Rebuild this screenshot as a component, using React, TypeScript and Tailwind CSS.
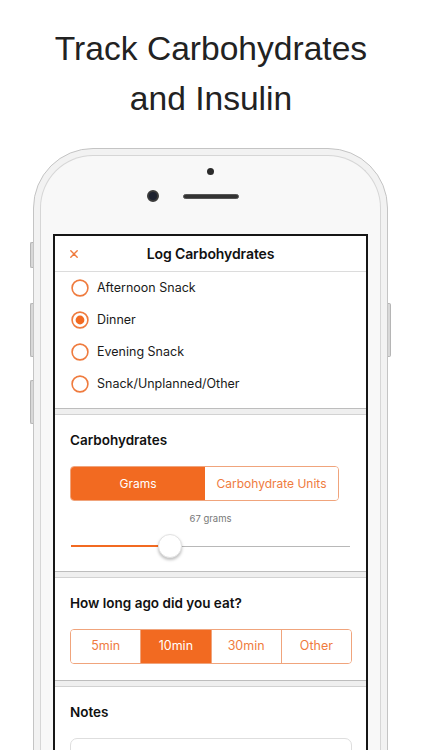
import React from "react";

const ORANGE = "#f26a21";

function Radio({ checked }: { checked?: boolean }) {
  return (
    <svg width="18" height="18" viewBox="0 0 18 18" className="shrink-0">
      <circle cx="9" cy="9" r="7.9" fill="none" stroke="#ef7b3e" strokeWidth="1.6" />
      {checked && <circle cx="9" cy="9" r="4.4" fill={ORANGE} />}
    </svg>
  );
}

function Separator() {
  return <div className="h-[7px] bg-[#efefef] border-t border-t-[#bdbdbd] border-b border-b-[#d2d2d2]" />;
}

export default function App() {
  const meals = [
    { label: "Afternoon Snack" },
    { label: "Dinner", checked: true },
    { label: "Evening Snack" },
    { label: "Snack/Unplanned/Other" },
  ];
  const times = ["5min", "10min", "30min", "Other"];
  const screenFont = { fontFamily: "Inter, 'Noto Sans', sans-serif" };

  return (
    <div className="w-[422px] h-[750px] overflow-hidden bg-white">
      <div
        className="pt-[24px] text-center text-[33.6px] leading-[50px] text-[#222]"
        style={{ fontFamily: "'Liberation Sans', Arial, sans-serif" }}
      >
        <div>Track Carbohydrates</div>
        <div>and Insulin</div>
      </div>

      {/* Phone */}
      <div className="relative mt-[24px] ml-[33px] w-[355px]">
        {/* side buttons */}
        <div className="absolute left-[-3px] top-[94px] w-[3px] h-[26px] rounded-l-[2px] bg-[#d8d8d8] border border-[#b5b5b5] border-r-0" />
        <div className="absolute left-[-3px] top-[155px] w-[3px] h-[54px] rounded-l-[2px] bg-[#d8d8d8] border border-[#b5b5b5] border-r-0" />
        <div className="absolute left-[-3px] top-[232px] w-[3px] h-[44px] rounded-l-[2px] bg-[#d8d8d8] border border-[#b5b5b5] border-r-0" />
        <div className="absolute right-[-3px] top-[155px] w-[3px] h-[54px] rounded-r-[2px] bg-[#d8d8d8] border border-[#b5b5b5] border-l-0" />

        <div className="h-[640px] rounded-t-[60px] border border-[#c4c4c4] bg-[#f2f2f2] p-[6px] pb-0">
          <div className="h-full rounded-t-[53px] border border-[#d6d6d6] border-b-0 bg-[#f8f8f8] px-[12px]">
            {/* top: dot, camera, speaker */}
            <div className="flex flex-col items-center pt-[12px]">
              <div className="w-[7px] h-[7px] rounded-full bg-[#2b2b2b]" />
              <div className="mt-[15px] flex items-center">
                <div className="w-[12px] h-[12px] rounded-full bg-[#1d2230] border-[2px] border-[#3a3a3a] mr-[24px]" />
                <div className="w-[56px] h-[5px] rounded-full bg-[#333] border border-[#555]" />
                <div className="w-[36px]" />
              </div>
            </div>

            {/* Screen */}
            <div
              className="mt-[32px] h-[530px] border-2 border-b-0 border-[#161616] bg-white text-[#111]"
              style={screenFont}
            >
              {/* header */}
              <div className="relative h-[36px] flex items-center justify-center border-b border-[#dcdcdc]">
                <svg className="absolute left-[15px] top-[14px]" width="8" height="8" viewBox="0 0 8 8">
                  <path d="M0.8 0.8 L7.2 7.2 M7.2 0.8 L0.8 7.2" stroke="#ef7b3e" strokeWidth="1.4" strokeLinecap="round" />
                </svg>
                <span className="text-[14px] font-semibold tracking-[-0.1px] text-[#111]">Log Carbohydrates</span>
              </div>

              {/* radio list */}
              <div className="pb-[8px]">
                {meals.map((m) => (
                  <div key={m.label} className="h-[32px] flex items-center pl-[16px] gap-[8px]">
                    <Radio checked={m.checked} />
                    <span className="text-[12.5px] text-[#1a1a1a]">{m.label}</span>
                  </div>
                ))}
              </div>

              <Separator />

              {/* carbs section */}
              <div className="px-[15px] pt-[15px] pb-[13px]">
                <div className="h-[20px] leading-[20px] text-[13.5px] font-semibold text-[#111]">Carbohydrates</div>
                <div className="mt-[16px] w-[269px] h-[35px] flex rounded-[4px] border border-[#f0a47c] overflow-hidden text-[12px]">
                  <div className="w-[134px] flex items-center justify-center bg-[#f26a21] text-white">Grams</div>
                  <div className="flex-1 flex items-center justify-center text-[#ef7b3e] bg-white">Carbohydrate Units</div>
                </div>
                <div className="mt-[12px] h-[12px] leading-[12px] text-center text-[9.5px] text-[#777]">67 grams</div>
                <div className="relative mt-[9px] h-[24px] ml-[1px] w-[279px] flex items-center">
                  <div className="h-[1.5px] w-[99px] bg-[#f26a21]" />
                  <div className="h-[1px] flex-1 bg-[#b8b8b8]" />
                  <div className="absolute left-[87px] top-0 w-[24px] h-[24px] rounded-full bg-white border border-[#e2e2e2] shadow-[0_2px_3px_rgba(0,0,0,0.25)]" />
                </div>
              </div>

              <Separator />

              {/* time section */}
              <div className="px-[15px] pt-[15px] pb-[16px]">
                <div className="h-[20px] leading-[20px] text-[13.5px] font-semibold text-[#111]">How long ago did you eat?</div>
                <div className="mt-[16px] w-[282px] h-[35px] flex rounded-[4px] border border-[#f0a47c] overflow-hidden text-[12.5px]">
                  {times.map((t, i) => (
                    <div
                      key={t}
                      className={
                        "flex-1 flex items-center justify-center " +
                        (i > 0 ? "border-l border-[#f0a47c] " : "") +
                        (t === "10min" ? "bg-[#f26a21] text-white" : "bg-white text-[#ef7b3e]")
                      }
                    >
                      {t}
                    </div>
                  ))}
                </div>
              </div>

              <Separator />

              {/* notes */}
              <div className="px-[15px] pt-[15px]">
                <div className="h-[20px] leading-[20px] text-[13.5px] font-semibold text-[#111]">Notes</div>
                <div className="mt-[16px] w-[282px] h-[60px] rounded-[7px] border border-[#dedede] bg-white" />
              </div>
            </div>
          </div>
        </div>
      </div>
    </div>
  );
}
